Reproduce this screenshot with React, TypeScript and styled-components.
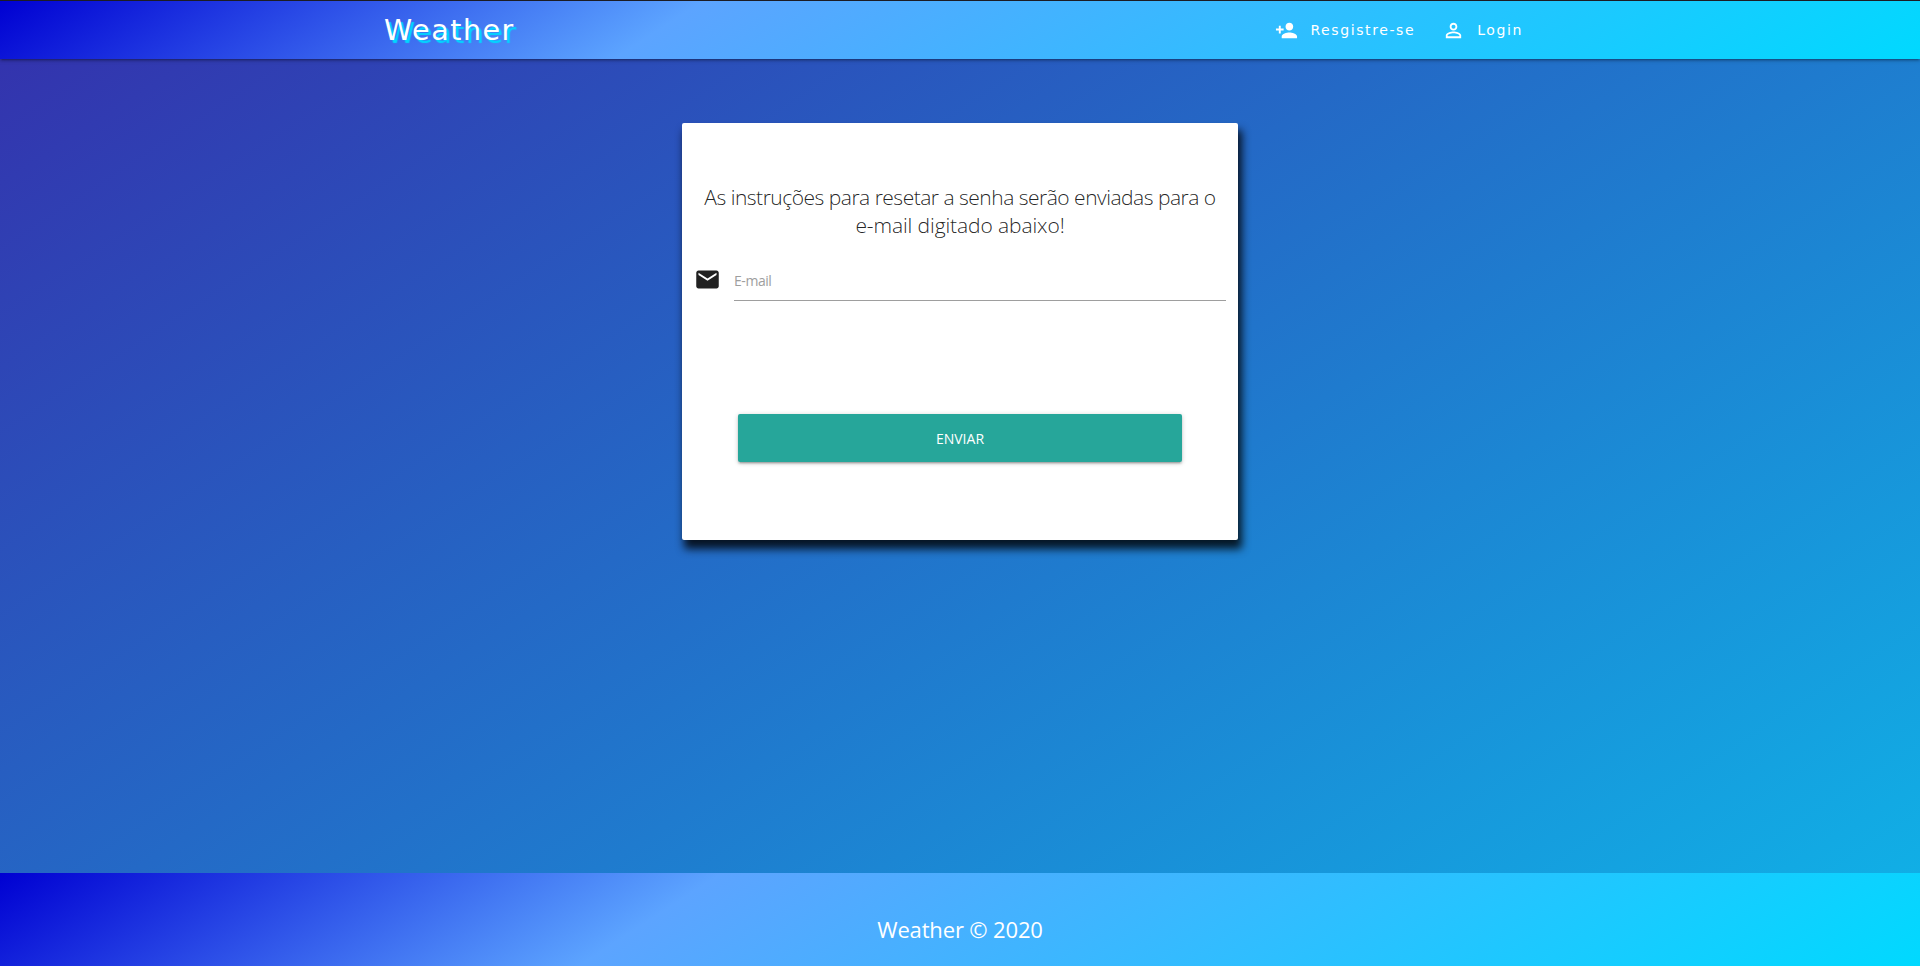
import React from "react";
import styled, { createGlobalStyle } from "styled-components";
import { MdPersonAdd, MdPersonOutline, MdEmail } from "react-icons/md";

const barGradient = "linear-gradient(147deg, #0000d2 0%, #5ca4ff 35%, #00d9ff 100%)";
const liftShadow =
  "0 2px 2px 0 rgba(0,0,0,.14), 0 3px 1px -2px rgba(0,0,0,.12), 0 1px 5px 0 rgba(0,0,0,.2)";

const GlobalStyle = createGlobalStyle`
  *, *::before, *::after { box-sizing: border-box; }
  body {
    margin: 0;
    color: rgba(0, 0, 0, 0.87);
    font-family: "Segoe UI", "Open Sans", "Noto Sans", sans-serif;
    font-size: 15px;
  }
`;

const Page = styled.div`
  display: flex;
  flex-direction: column;
  height: 966px;
  overflow: hidden;
  border-top: 1px solid #1c1c24;
  background: linear-gradient(147deg, #3430ac 0%, #0fb4e8 100%);
`;

const NavBar = styled.nav`
  flex: none;
  height: 58px;
  background: ${barGradient};
  box-shadow: ${liftShadow};
`;

const NavContent = styled.div`
  display: flex;
  justify-content: space-between;
  align-items: center;
  width: 1152px;
  height: 100%;
  margin: 0 auto;
  padding-right: 13px;
`;

const Brand = styled.a`
  padding-top: 2px;
  color: #fff;
  font-family: "DejaVu Sans", Verdana, sans-serif;
  font-size: 28.5px;
  line-height: 56px;
  letter-spacing: 1.55px;
  text-shadow: 3px 3px 1px #00d8ff;
`;

const NavLinks = styled.div`
  display: flex;
  gap: 27px;
`;

const NavLink = styled.a`
  display: flex;
  align-items: center;
  gap: 12px;
  color: #fff;
  font-family: "DejaVu Sans", Verdana, sans-serif;
  font-size: 14px;
  letter-spacing: 1.6px;
`;

const Main = styled.main`
  display: flex;
  flex: 1;
  justify-content: center;
  align-items: flex-start;
  padding-top: 64px;
`;

const Card = styled.section`
  width: 556px;
  height: 417px;
  padding: 60px 12px 0;
  border-radius: 2px;
  background: #fff;
  box-shadow: 3px 8px 9px 1px rgba(0, 0, 0, 0.82);
`;

const Message = styled.h1`
  margin: 0;
  font-size: 21px;
  font-weight: 300;
  line-height: 28px;
  text-align: center;
`;

const MessageLine = styled.span<{ $tracking: number }>`
  display: block;
  letter-spacing: ${({ $tracking }) => $tracking}px;
  white-space: nowrap;
`;

const Field = styled.label`
  display: flex;
  align-items: flex-start;
  margin-top: 27px;
  height: 35px;
`;

const FieldInput = styled.input`
  flex: 1;
  height: 35px;
  margin-left: 13px;
  padding: 0 0 5px;
  border: 0;
  border-bottom: 1px solid #9e9e9e;
  outline: 0;
  font: inherit;
  font-size: 14px;
  letter-spacing: -0.45px;
  &::placeholder { color: #9e9e9e; opacity: 1; }
`;

const Submit = styled.button`
  display: block;
  width: 444px;
  height: 48px;
  margin: 113px auto 0;
  padding: 0;
  border: 0;
  border-radius: 2px;
  background: #26a69a;
  box-shadow: ${liftShadow};
  color: #fff;
  font: inherit;
  font-size: 14px;
`;

const Footer = styled.footer`
  flex: none;
  height: 93px;
  padding-top: 39px;
  background: ${barGradient};
  color: #fff;
  font-size: 22px;
  line-height: 34px;
  letter-spacing: -0.15px;
  text-align: center;
`;

export default function App() {
  return (
    <Page>
      <GlobalStyle />
      <NavBar>
        <NavContent>
          <Brand>Weather</Brand>
          <NavLinks>
            <NavLink><MdPersonAdd size={23} />Resgistre-se</NavLink>
            <NavLink><MdPersonOutline size={23} />Login</NavLink>
          </NavLinks>
        </NavContent>
      </NavBar>
      <Main>
        <Card>
          <Message>
            <MessageLine $tracking={-0.5}>As instruções para resetar a senha serão enviadas para o</MessageLine>
            <MessageLine $tracking={-0.1}>e-mail digitado abaixo!</MessageLine>
          </Message>
          <Field>
            <MdEmail size={27} color="#212121" />
            <FieldInput type="email" placeholder="E-mail" />
          </Field>
          <Submit>ENVIAR</Submit>
        </Card>
      </Main>
      <Footer>Weather © 2020</Footer>
    </Page>
  );
}
